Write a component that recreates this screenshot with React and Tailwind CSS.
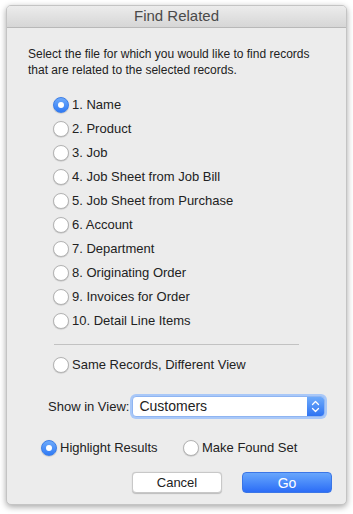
import React from "react";

const FILES = [
  "1. Name",
  "2. Product",
  "3. Job",
  "4. Job Sheet from Job Bill",
  "5. Job Sheet from Purchase",
  "6. Account",
  "7. Department",
  "8. Originating Order",
  "9. Invoices for Order",
  "10. Detail Line Items",
];

function Radio({ checked }) {
  if (checked) {
    return (
      <span className="w-[16px] h-[16px] rounded-full flex items-center justify-center flex-shrink-0 bg-gradient-to-b from-[#6eaafa] to-[#2f7af5] border border-[#3c7ee8] shadow-[0_0.5px_1px_rgba(0,0,0,.25)]">
        <span className="w-[6px] h-[6px] rounded-full bg-white" />
      </span>
    );
  }
  return (
    <span className="w-[16px] h-[16px] rounded-full flex-shrink-0 bg-white border border-[#b4b4b4] shadow-[0_0.5px_1px_rgba(0,0,0,.2)]" />
  );
}

export default function App() {
  return (
    <div className="w-[353px] h-[514px] bg-white pt-[5px] pl-[6px]"
      style={{ fontFamily: '"Liberation Sans", Arial, sans-serif' }}>
      <div className="w-[341px] h-[500px] rounded-[5px] bg-[#ececec] border border-[#c4c4c4] shadow-[0_2px_6px_rgba(0,0,0,.35)] overflow-hidden flex flex-col">
        <div className="h-[22px] flex items-center justify-center bg-gradient-to-b from-[#ececec] to-[#d6d6d6] border-b border-[#b8b8b8] text-[15px] text-[#4a4a4a]">
          Find Related
        </div>

        <div className="flex flex-col text-[13px] text-[#222]">
          <p className="pl-[21px] pt-[18px] leading-[16px] text-[12px]">
            Select the file for which you would like to find records
            <br />
            that are related to the selected records.
          </p>

          <div className="flex flex-col pl-[46px] pt-[15px]">
            {FILES.map((f, i) => (
              <label key={f} className="h-[24px] flex items-center gap-[3px]">
                <Radio checked={i === 0} />
                <span>{f}</span>
              </label>
            ))}
          </div>

          <div className="ml-[47px] mr-[47px] mt-[11px] h-px bg-[#c2c2c2]" />

          <label className="h-[24px] mt-[8px] pl-[46px] flex items-center gap-[3px]">
            <Radio />
            <span>Same Records, Different View</span>
          </label>

          <div className="mt-[19px] flex items-center pl-[41px]">
            <span>Show in View:</span>
            <div className="ml-[3px] w-[193px] h-[21px] rounded-[4px] bg-white border border-[#8fb5f2] ring-[2px] ring-[#a9c8f8] flex items-center justify-between">
              <span className="pl-[6px] text-[14px]">Customers</span>
              <span className="w-[17px] h-[19px] rounded-r-[3px] bg-gradient-to-b from-[#6eaafa] to-[#2f73f2] flex items-center justify-center">
                <svg width="9" height="13" viewBox="0 0 9 13" fill="none" stroke="white" strokeWidth="1.3" strokeLinecap="round" strokeLinejoin="round">
                  <path d="M1.5 4.5 L4.5 1.5 L7.5 4.5" />
                  <path d="M1.5 8.5 L4.5 11.5 L7.5 8.5" />
                </svg>
              </span>
            </div>
          </div>

          <div className="mt-[21px] flex items-center pl-[34px]">
            <label className="flex items-center gap-[3px] w-[142px]">
              <Radio checked />
              <span>Highlight Results</span>
            </label>
            <label className="flex items-center gap-[3px]">
              <Radio />
              <span>Make Found Set</span>
            </label>
          </div>

          <div className="mt-[14px] flex items-center justify-end gap-[20px] pr-[14px]">
            <button className="w-[90px] h-[21px] rounded-[4px] bg-white border border-[#c8c8c8] shadow-[0_0.5px_1px_rgba(0,0,0,.2)] text-[13px] text-[#222]">
              Cancel
            </button>
            <button className="w-[90px] h-[21px] rounded-[4px] bg-gradient-to-b from-[#68a6fc] to-[#2c6cf6] border border-[#3b76e6] text-[14px] text-white">
              Go
            </button>
          </div>
        </div>
      </div>
    </div>
  );
}
